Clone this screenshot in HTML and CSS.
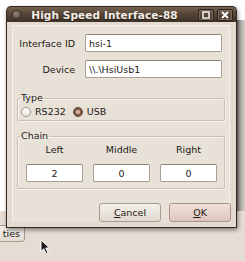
FILE: index.html
```html
<!DOCTYPE html>
<html lang="en">
<head>
  <meta charset="UTF-8" />
  <title>High Speed Interface-88</title>
  <link rel="stylesheet" href="styles.css">
</head>
<body>

  <div class="desktop">
    <!-- area behind the dialog -->
    <div class="backdrop">
      <div class="edge"></div>
    </div>
    <div class="panel">
      <button class="task-btn">ties</button>
    </div>

    <!-- Dialog window -->
    <div class="window">
      <div class="titlebar">
        <span class="win-dot"></span>
        <span class="win-title">High Speed Interface-88</span>
        <span class="win-btn">
          <svg viewBox="0 0 8 8" width="8" height="8"><rect x="1" y="1" width="6" height="6" fill="none" stroke="#fff" stroke-width="1.4"/></svg>
        </span>
        <span class="win-btn">
          <svg viewBox="0 0 8 8" width="8" height="8"><path d="M1 1L7 7M7 1L1 7" stroke="#fff" stroke-width="1.8"/></svg>
        </span>
      </div>

      <div class="frame">
        <div class="content">
          <div class="fields">
            <label class="field-label" for="ifid">Interface ID</label>
            <input class="entry" id="ifid" value="hsi-1">
            <label class="field-label" for="dev">Device</label>
            <input class="entry" id="dev" value="\\.\HsiUsb1">
          </div>

          <fieldset class="group group-type">
            <legend>Type</legend>
            <div class="radios">
              <label class="radio"><input type="radio" name="type"> RS232</label>
              <label class="radio"><input type="radio" name="type" checked> USB</label>
            </div>
          </fieldset>

          <fieldset class="group group-chain">
            <legend>Chain</legend>
            <div class="chain">
              <span class="chain-label">Left</span>
              <span class="chain-label">Middle</span>
              <span class="chain-label">Right</span>
              <input class="entry small" value="2">
              <input class="entry small" value="0">
              <input class="entry small" value="0">
            </div>
          </fieldset>

          <div class="actions">
            <button class="btn"><u>C</u>ancel</button>
            <button class="btn btn-default"><u>O</u>K</button>
          </div>
        </div>
      </div>
    </div>

    <!-- mouse pointer -->
    <svg class="cursor" viewBox="0 0 11 16" width="11" height="16">
      <path d="M1 1L1 12.5L3.8 9.8L6 14.6L8 13.7L5.8 9L9.6 9Z" fill="#1c1c1c" stroke="#fff" stroke-width="1" stroke-linejoin="round"/>
    </svg>
  </div>

</body>
</html>
```

FILE: styles.css
```css
html, body {
  margin: 0;
  padding: 0;
  background: #fff;
  font-family: "DejaVu Sans", "Liberation Sans", sans-serif;
  font-size: 9.5px;
  color: #1e1a16;
}

.desktop {
  position: relative;
  width: 245px;
  height: 261px;
  overflow: hidden;
  display: flex;
  flex-direction: column;
}

.backdrop {
  height: 211px;
  background: #fff;
  display: flex;
  justify-content: flex-end;
  padding-top: 20px;
  box-sizing: border-box;
}

.edge {
  width: 8px;
  background: linear-gradient(to right, #6f6a66, #a7a39f 30%, #cfccc8);
}

.panel {
  flex: 1;
  background: #e5ddd3;
  padding-top: 14px;
}

.task-btn {
  display: block;
  margin-left: -22px;
  width: 47px;
  height: 17px;
  padding: 0 4px 0 0;
  text-align: right;
  font: inherit;
  color: #1e1a16;
  background: linear-gradient(#f1ede8, #e3dcd3);
  border: 1px solid #a79d91;
  border-radius: 3px;
}

/* window */
.window {
  position: absolute;
  left: 6px;
  top: 6px;
  width: 231px;
  border-radius: 5px 5px 2px 2px;
  box-shadow: 1px 2px 4px rgba(0, 0, 0, 0.45);
}

.titlebar {
  height: 16px;
  display: flex;
  align-items: center;
  padding: 0 3px 0 6px;
  border-radius: 5px 5px 0 0;
  background: linear-gradient(#74624f, #574638 45%, #3e3128);
  border: 1px solid #35291f;
  border-bottom: none;
  box-sizing: border-box;
}

.win-dot {
  width: 7px;
  height: 7px;
  border-radius: 50%;
  background: radial-gradient(circle at 40% 35%, #8e827a, #5b5049);
  box-shadow: 0 0 0 1px #3d332b;
}

.win-title {
  flex: 1;
  text-align: center;
  font-weight: bold;
  font-size: 10.5px;
  color: #f4eee6;
  text-shadow: 0 1px 1px #2a2019;
  letter-spacing: 0.1px;
  margin-right: 6px;
}

.win-btn {
  width: 14px;
  height: 10px;
  margin-left: 3px;
  display: flex;
  align-items: center;
  justify-content: center;
  border: 1px solid #2c221a;
  border-radius: 2px;
  background: linear-gradient(#6a5849, #43362c);
  box-shadow: inset 0 0 0 1px #7d6a59;
}

.frame {
  border: 1px solid #35291f;
  border-top: none;
  background: #e3dbd1;
  padding: 3px 6px 5px 5px;
}

.content {
  border: 1px solid #f5f1ec;
  border-bottom: none;
  background: #e8e1d8;
  padding-top: 8px;
}

.fields {
  display: grid;
  grid-template-columns: 72px 137px;
  row-gap: 8px;
  align-items: center;
}

.field-label {
  text-align: right;
  padding-right: 10px;
}

.entry {
  box-sizing: border-box;
  height: 18px;
  margin: 0;
  padding: 0 3px;
  font: inherit;
  color: #1e1a16;
  background: #fff;
  border: 1px solid #a89e92;
  border-top-color: #8f8579;
  border-radius: 2px;
  outline: none;
}

.entry.small {
  width: 57px;
  text-align: center;
}

.group {
  margin: 14px 4px 0;
  padding: 0 0 0 2px;
  border: 1px solid #c9bfb3;
  border-radius: 2px;
  box-shadow: 1px 1px 0 #f6f2ed, inset 1px 1px 0 #f6f2ed;
}

.group legend {
  padding: 0 1px;
  line-height: 12px;
}

.group-chain {
  margin-top: 9px;
}

.radios {
  display: flex;
  align-items: center;
  height: 15px;
  padding-left: 1px;
  padding-bottom: 1px;
  gap: 7px;
}

.radio {
  display: flex;
  align-items: center;
  gap: 4px;
}

.radio input {
  appearance: none;
  margin: 0;
  width: 10px;
  height: 10px;
  border-radius: 50%;
  border: 1px solid #a0968a;
  background: linear-gradient(#ffffff, #ece7e1);
  box-sizing: border-box;
}

.radio input:checked {
  border-color: #5e4030;
  background: radial-gradient(circle, #d8b9a4 0 1.5px, #845a44 2.5px);
}

.chain {
  display: grid;
  grid-template-columns: repeat(3, 57px);
  column-gap: 10px;
  padding: 2px 0 6px 6px;
}

.chain-label {
  text-align: center;
  line-height: 12px;
  margin-bottom: 8px;
}

.actions {
  display: flex;
  justify-content: flex-end;
  gap: 8px;
  margin: 14px -2px 0 0;
}

.btn {
  width: 62px;
  height: 19px;
  padding: 0;
  font: inherit;
  color: #1e1a16;
  border: 1px solid #a69b8e;
  border-radius: 3px;
  background: linear-gradient(#f3efea, #e2dad0);
}

.btn-default {
  border-color: #a8928a;
  background: linear-gradient(#f1e1da, #dcc6bc);
}

.cursor {
  position: absolute;
  left: 40px;
  top: 239px;
}
```
